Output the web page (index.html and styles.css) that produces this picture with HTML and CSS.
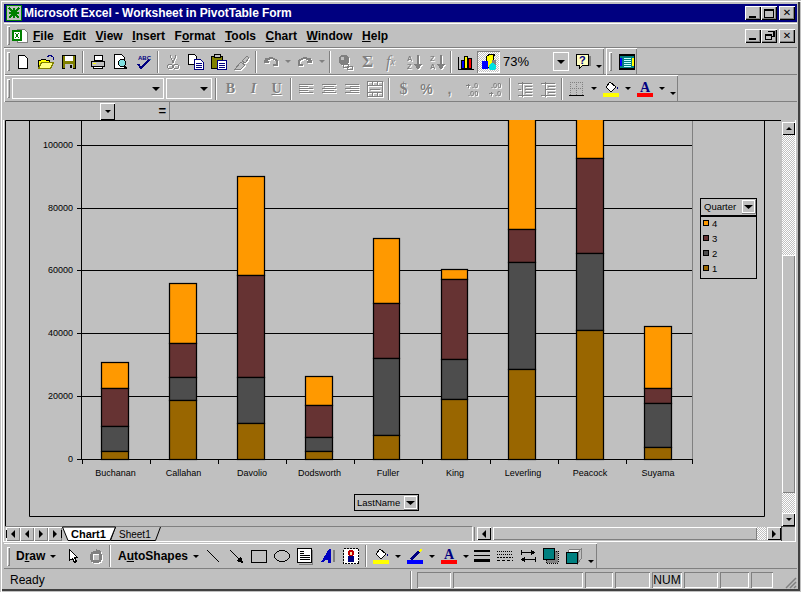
FILE: index.html
```html
<!DOCTYPE html>
<html lang="en">
<head>
    <meta charset="UTF-8">
    <meta name="viewport" content="width=device-width, initial-scale=1.0">
    <title>Microsoft Excel - Worksheet in PivotTable Form</title>
    <link rel="stylesheet" href="styles.css">
</head>
<body>
<div class="window">
    <div class="titlebar">
        <svg class="ic" viewBox="0 0 16 16"><rect x="0.5" y="0.5" width="15" height="15" fill="#c0c0c0" stroke="#008000"/><path d="M3 3l10 10M13 3L3 13M3 8h10M8 3v10" stroke="#008000" stroke-width="2"/></svg>
        <span class="title-text">Microsoft Excel - Worksheet in PivotTable Form</span>
        <div class="winbtns">
            <span class="winbtn"><i class="g-min"></i></span>
            <span class="winbtn"><i class="g-max"></i></span>
            <span class="winbtn gap"><b class="g-x">✕</b></span>
        </div>
    </div>

    <div class="menubar">
        <span class="grip"></span>
        <svg class="ic menu-icon" viewBox="0 0 16 16"><path d="M5.5 1.5h7l3 3v10h-10z" fill="#fff" stroke="#808080"/><rect x="0" y="2" width="10" height="11" fill="#008000"/><rect x="2" y="4" width="6" height="7" fill="#fff"/><path d="M3 5l4 5M7 5l-4 5" stroke="#008000"/></svg>
        <nav class="menu">
            <span><u>F</u>ile</span><span><u>E</u>dit</span><span><u>V</u>iew</span><span><u>I</u>nsert</span><span>F<u>o</u>rmat</span><span><u>T</u>ools</span><span><u>C</u>hart</span><span><u>W</u>indow</span><span><u>H</u>elp</span>
        </nav>
        <div class="winbtns">
            <span class="winbtn"><i class="g-min"></i></span>
            <span class="winbtn"><i class="g-restore"></i></span>
            <span class="winbtn gap"><b class="g-x">✕</b></span>
        </div>
    </div>

    <div class="tbrow">
        <div class="toolbar standard">
            <span class="grip"></span>
            <span class="btn"><svg class="ic" viewBox="0 0 16 16"><path d="M3.5 1.5h6l3 3v10h-9z" fill="#fff" stroke="#000"/></svg></span>
            <span class="btn"><svg class="ic" viewBox="0 0 16 16"><path d="M0.5 14.5v-8h2l1-1h4l1 1h3v2" fill="#ffff00" stroke="#000"/><path d="M0.5 14.5l3-6h12l-3 6z" fill="#ffff80" stroke="#808000"/><path d="M9 3l3-2 3 2M15 3v3" fill="none" stroke="#000080"/></svg></span>
            <span class="btn"><svg class="ic" viewBox="0 0 16 16"><rect x="1.5" y="1.5" width="13" height="13" fill="#808000" stroke="#000"/><rect x="4" y="2" width="8" height="5" fill="#fff"/><rect x="4" y="10" width="8" height="5" fill="#c0c0c0"/><rect x="9" y="11" width="2" height="3" fill="#000"/></svg></span>
            <span class="sep"></span>
            <span class="btn"><svg class="ic" viewBox="0 0 16 16"><path d="M4.5 1.5h8v5h-8z" fill="#fff" stroke="#000"/><path d="M1.5 7.5h13v5h-13z" fill="#c0c0c0" stroke="#000"/><path d="M3.5 12.5h9v2h-9z" fill="#fff" stroke="#000"/><path d="M3 9h3" stroke="#ffff00"/></svg></span>
            <span class="btn"><svg class="ic" viewBox="0 0 16 16"><path d="M1.5 0.5h7l3 3v11h-10z" fill="#fff" stroke="#000"/><circle cx="9" cy="9" r="3.5" fill="#80e0e0" stroke="#000"/><path d="M11 12l3 3" stroke="#000" stroke-width="2"/></svg></span>
            <span class="btn"><svg class="ic" viewBox="0 0 16 16"><text x="2" y="6" class="tiny">ABC</text><path d="M2 10l3 4 8-8" fill="none" stroke="#000080" stroke-width="2"/></svg></span>
            <span class="sep"></span>
            <span class="btn"><svg class="ic dis" viewBox="0 0 16 16"><path d="M5 1l3 8M11 1L8 9" stroke="#808080"/><circle cx="5" cy="12.500" r="2.500" fill="none" stroke="#808080"/><circle cx="11" cy="12.500" r="2.500" fill="none" stroke="#808080"/></svg></span>
            <span class="btn"><svg class="ic" viewBox="0 0 16 16"><path d="M0.500 0.500h6l2 2v8h-8z" fill="#fff" stroke="#000"/><path d="M6.500 5.500h6l3 3v7h-9z" fill="#fff" stroke="#000080"/><path d="M8 9h6M8 11h6M8 13h6" stroke="#000080"/></svg></span>
            <span class="btn"><svg class="ic" viewBox="0 0 16 16"><path d="M0.500 2.500h11v12h-11z" fill="#808000" stroke="#000"/><rect x="3" y="0" width="6" height="3" fill="#c0c0c0" stroke="#000"/><path d="M6.500 6.500h9v9h-9z" fill="#fff" stroke="#000080"/><path d="M8 9h6M8 11h6M8 13h6" stroke="#000080"/></svg></span>
            <span class="btn"><svg class="ic dis" viewBox="0 0 16 16"><path d="M1 15l6-7 4 3-4 4zM8 7l5-5 2 2-4 5z" fill="#c0c0c0" stroke="#808080"/></svg></span>
            <span class="sep"></span>
            <span class="btn"><svg class="ic dis" viewBox="0 0 16 16"><path d="M3 4l-1 4 4 0M2.500 8C5 3 10 3 14 7v4h-4" fill="none" stroke="#808080" stroke-width="2"/></svg></span>
            <span class="drop"><i class="arr off"></i></span>
            <span class="btn"><svg class="ic dis" viewBox="0 0 16 16"><path d="M13 4l1 4-4 0M13.500 8C11 3 6 3 2 7v4h4" fill="none" stroke="#808080" stroke-width="2"/></svg></span>
            <span class="drop"><i class="arr off"></i></span>
            <span class="sep"></span>
            <span class="btn"><svg class="ic dis" viewBox="0 0 16 16"><circle cx="7" cy="6" r="5.500" fill="#808080"/><path d="M4 3h3v3H4z" fill="#c0c0c0"/><rect x="6.500" y="10.500" width="5" height="3" rx="1" fill="none" stroke="#808080"/><rect x="10.500" y="12.500" width="5" height="3" rx="1" fill="none" stroke="#808080"/></svg></span>
            <span class="btn off-text serif sigma">Σ</span>
            <span class="btn off-text serif fx"><em>f</em><small>x</small></span>
            <span class="btn"><svg class="ic dis" viewBox="0 0 16 16"><text x="1" y="7" class="sort">A</text><text x="1" y="15" class="sort">Z</text><path d="M12 1v11M9 10l3 4 3-4" fill="none" stroke="#808080" stroke-width="2"/></svg></span>
            <span class="btn"><svg class="ic dis" viewBox="0 0 16 16"><text x="1" y="7" class="sort">Z</text><text x="1" y="15" class="sort">A</text><path d="M12 1v11M9 10l3 4 3-4" fill="none" stroke="#808080" stroke-width="2"/></svg></span>
            <span class="sep"></span>
            <span class="btn"><svg class="ic" viewBox="0 0 16 16"><path d="M0 15.500h16M0.500 3v13" stroke="#000"/><rect x="3.500" y="6.500" width="3" height="8" fill="#0000ff" stroke="#000"/><rect x="6.500" y="2.500" width="3" height="12" fill="#ffff00" stroke="#000"/><rect x="10.500" y="4.500" width="3" height="10" fill="#ff0000" stroke="#000"/></svg></span>
            <span class="btn on"><svg class="ic" viewBox="0 0 16 16"><path d="M5 3l4-3h5l-2 3v10H5z" fill="#ffff00" stroke="#000"/><path d="M1 7h6v8H1z" fill="#0000ff"/><path d="M11 6h4v5h-4z" fill="#808080"/><circle cx="11.500" cy="12.500" r="3.500" fill="#00e0e0"/></svg></span>
            <span class="zoombox">73%<i class="zoomdrop"><i class="arr big"></i></i></span>
            <span class="btn help"><svg class="ic" viewBox="0 0 16 16"><path d="M1.500 0.500h12v11h-6l-3 3v-3h-3z" fill="#ffffc0" stroke="#000"/><path d="M15 2v10" stroke="#808080" stroke-width="1.500"/><text x="4" y="10" class="qm">?</text></svg></span>
            <span class="drop narrow"><i class="arr more"></i></span>
        </div>
        <div class="toolbar mini">
            <span class="grip"></span>
            <svg class="ic" viewBox="0 0 16 16"><rect width="16" height="16" fill="#000"/><rect x="1" y="2" width="14" height="12" fill="#008080"/><path d="M5 4h7M5 6h7M5 8h7M5 10h7M5 12h7" stroke="#c0ffff"/><rect x="1" y="4" width="2" height="8" fill="#0000ff"/><rect x="13" y="4" width="2" height="8" fill="#ffff00"/></svg>
        </div>
    </div>

    <div class="tbrow">
        <div class="toolbar formatting">
            <span class="grip"></span>
            <span class="combo font"><i class="arr big"></i></span>
            <span class="combo size"><i class="arr big"></i></span>
            <span class="sep"></span>
            <span class="btn off-text serif bold">B</span>
            <span class="btn off-text serif bold italic">I</span>
            <span class="btn off-text serif bold under">U</span>
            <span class="sep"></span>
            <span class="btn"><svg class="ic dis" viewBox="0 0 16 16"><path d="M1 3.500h14M1 5.500h9M1 7.500h14M1 9.500h9M1 11.500h14" stroke="#808080"/></svg></span>
            <span class="btn"><svg class="ic dis" viewBox="0 0 16 16"><path d="M1 3.500h14M3 5.500h10M1 7.500h14M3 9.500h10M1 11.500h14" stroke="#808080"/></svg></span>
            <span class="btn"><svg class="ic dis" viewBox="0 0 16 16"><path d="M1 3.500h14M6 5.500h9M1 7.500h14M6 9.500h9M1 11.500h14" stroke="#808080"/></svg></span>
            <span class="btn"><svg class="ic dis" viewBox="0 0 16 16"><rect x="0.500" y="0.500" width="15" height="15" fill="none" stroke="#808080"/><path d="M1 4.500h14M1 11.500h14M5.500 1v3M10.500 1v3M5.500 12v3M10.500 12v3M3 8h10" stroke="#808080"/></svg></span>
            <span class="sep"></span>
            <span class="btn off-text serif bold big">$</span>
            <span class="btn off-text sans bold">%</span>
            <span class="btn off-text sans bold">,</span>
            <span class="btn"><svg class="ic dis" viewBox="0 0 16 16"><path d="M1 4.500h4M3 2.500v4" stroke="#808080"/><text x="7" y="7" class="sort">.0</text><text x="3" y="15" class="sort">.00</text></svg></span>
            <span class="btn"><svg class="ic dis" viewBox="0 0 16 16"><text x="3" y="7" class="sort">.00</text><path d="M1 12.500h4M3 10.500v4" stroke="#808080"/><text x="7" y="15" class="sort">.0</text></svg></span>
            <span class="sep"></span>
            <span class="btn"><svg class="ic dis" viewBox="0 0 16 16"><path d="M1 2.500h14M8 5.500h7M8 8.500h7M8 11.500h7M1 14.500h14M5.500 1v15M1 8.500h3" stroke="#808080"/></svg></span>
            <span class="btn"><svg class="ic dis" viewBox="0 0 16 16"><path d="M1 2.500h14M8 5.500h7M8 8.500h7M8 11.500h7M1 14.500h14M5.500 1v15M6 8.500h2" stroke="#808080"/></svg></span>
            <span class="sep"></span>
            <span class="btn"><svg class="ic" viewBox="0 0 16 16"><path d="M1 1.500h13M1 7.500h13M1.500 1v13M7.500 1v13M13.500 1v13" stroke="#808080" stroke-dasharray="1 1"/><path d="M0 14.500h15" stroke="#000"/></svg></span>
            <span class="drop"><i class="arr"></i></span>
            <span class="btn"><svg class="ic" viewBox="0 0 16 16"><path d="M7 1l6 5-5 5-5-5z" fill="#fff" stroke="#000"/><path d="M13 5c2 1 3 3 2 5l-1-4z" fill="#000080"/><rect y="12" width="16" height="4" fill="#ffff00"/></svg></span>
            <span class="drop"><i class="arr"></i></span>
            <span class="btn"><svg class="ic" viewBox="0 0 16 16"><text x="8" y="11" class="fonta">A</text><rect y="12" width="16" height="4" fill="#ff0000"/></svg></span>
            <span class="drop"><i class="arr"></i></span>
            <span class="drop"><i class="arr more"></i></span>
        </div>
    </div>

    <div class="formula">
        <span class="namebox"><span class="namedrop"><i class="arr"></i></span></span>
        <span class="equals">=</span>
    </div>

    <div class="workbook">
        <div class="sheet">
            <svg class="chart" viewBox="5 120 776 406" width="776" height="406">
                <path class="frame" d="M5.500 526V120.500H781"/>
                <path class="frame" d="M29.500 120v396.500h735V120"/>
                <path class="plotedge" d="M692.500 121v338"/>
                <g class="grid">
                    <path d="M77 145.500h615M77 208.500h615M77 270.500h615M77 333.500h615M77 396.500h615"/>
                    <path d="M81.500 120v339.500M77 459.500h616"/>
                    <path d="M82.500 459v5M150.500 459v5M218.500 459v5M286.500 459v5M354.500 459v5M422.500 459v5M490.500 459v5M558.500 459v5M626.500 459v5M692.500 459v5"/>
                </g>
                <g class="axis-y">
                    <text x="73" y="148">100000</text>
                    <text x="73" y="211">80000</text>
                    <text x="73" y="273">60000</text>
                    <text x="73" y="336">40000</text>
                    <text x="73" y="399">20000</text>
                    <text x="73" y="462">0</text>
                </g>
                <g class="bars">
                    <rect class="s4" x="101.500" y="362.500" width="27" height="26"/><rect class="s3" x="101.500" y="388.500" width="27" height="38"/><rect class="s2" x="101.500" y="426.500" width="27" height="25"/><rect class="s1" x="101.500" y="451.500" width="27" height="8"/>
                    <rect class="s4" x="169.500" y="283.500" width="27" height="60"/><rect class="s3" x="169.500" y="343.500" width="27" height="34"/><rect class="s2" x="169.500" y="377.500" width="27" height="23"/><rect class="s1" x="169.500" y="400.500" width="27" height="59"/>
                    <rect class="s4" x="237.500" y="176.500" width="27" height="99"/><rect class="s3" x="237.500" y="275.500" width="27" height="102"/><rect class="s2" x="237.500" y="377.500" width="27" height="46"/><rect class="s1" x="237.500" y="423.500" width="27" height="36"/>
                    <rect class="s4" x="305.500" y="376.500" width="27" height="29"/><rect class="s3" x="305.500" y="405.500" width="27" height="32"/><rect class="s2" x="305.500" y="437.500" width="27" height="14"/><rect class="s1" x="305.500" y="451.500" width="27" height="8"/>
                    <rect class="s4" x="373.500" y="238.500" width="26" height="65"/><rect class="s3" x="373.500" y="303.500" width="26" height="55"/><rect class="s2" x="373.500" y="358.500" width="26" height="77"/><rect class="s1" x="373.500" y="435.500" width="26" height="24"/>
                    <rect class="s4" x="441.500" y="269.500" width="26" height="10"/><rect class="s3" x="441.500" y="279.500" width="26" height="80"/><rect class="s2" x="441.500" y="359.500" width="26" height="40"/><rect class="s1" x="441.500" y="399.500" width="26" height="60"/>
                    <rect class="s4" x="508.500" y="118" width="27" height="111.500"/><rect class="s3" x="508.500" y="229.500" width="27" height="33"/><rect class="s2" x="508.500" y="262.500" width="27" height="107"/><rect class="s1" x="508.500" y="369.500" width="27" height="90"/>
                    <rect class="s4" x="576.500" y="118" width="27" height="40.500"/><rect class="s3" x="576.500" y="158.500" width="27" height="95"/><rect class="s2" x="576.500" y="253.500" width="27" height="77"/><rect class="s1" x="576.500" y="330.500" width="27" height="129"/>
                    <rect class="s4" x="644.500" y="326.500" width="27" height="62"/><rect class="s3" x="644.500" y="388.500" width="27" height="15"/><rect class="s2" x="644.500" y="403.500" width="27" height="44"/><rect class="s1" x="644.500" y="447.500" width="27" height="12"/>
                </g>
                <g class="axis-x">
                    <text x="115.500" y="476">Buchanan</text>
                    <text x="183.500" y="476">Callahan</text>
                    <text x="252" y="476">Davolio</text>
                    <text x="319.500" y="476">Dodsworth</text>
                    <text x="388" y="476">Fuller</text>
                    <text x="455" y="476">King</text>
                    <text x="523" y="476">Leverling</text>
                    <text x="590" y="476">Peacock</text>
                    <text x="658" y="476">Suyama</text>
                </g>
                <g class="field">
                    <rect class="field-box" x="354.500" y="494.500" width="64" height="16"/>
                    <text x="357" y="506">LastName</text>
                    <rect class="field-btn" x="404.500" y="496.500" width="12" height="12"/>
                    <path class="field-dark" d="M417.500 496v13.500H404"/>
                    <path d="M406 501h9l-4.500 4z"/>
                </g>
                <g class="field">
                    <rect class="legend-box" x="700.500" y="198.500" width="56" height="80"/>
                    <rect class="field-box" x="700.500" y="198.500" width="56" height="18"/>
                    <path class="field-rule" d="M701 216h55"/>
                    <text x="704" y="210">Quarter</text>
                    <rect class="field-btn" x="742.500" y="200.500" width="12" height="12"/>
                    <path class="field-dark" d="M755.500 200v13.500H742"/>
                    <path d="M744 205h9l-4.500 4z"/>
                    <rect class="s4" x="703.500" y="220.500" width="5" height="5"/><text x="712" y="227">4</text>
                    <rect class="s3" x="703.500" y="235.500" width="5" height="5"/><text x="712" y="242">3</text>
                    <rect class="s2" x="703.500" y="250.500" width="5" height="5"/><text x="712" y="257">2</text>
                    <rect class="s1" x="703.500" y="265.500" width="5" height="5"/><text x="712" y="272">1</text>
                </g>
            </svg>
            <div class="vscroll">
                <span class="sbtn"><i class="up"></i></span>
                <span class="track upper"></span>
                <span class="thumb"></span>
                <span class="track lower"></span>
                <span class="sbtn"><i class="down"></i></span>
            </div>
        </div>
        <div class="tabbar">
            <div class="tabarea">
                <div class="tabnav">
                    <span class="nav"><i class="first"></i></span>
                    <span class="nav"><i class="prev"></i></span>
                    <span class="nav"><i class="next"></i></span>
                    <span class="nav"><i class="last"></i></span>
                </div>
                <svg class="tabs" viewBox="0 0 104 14" width="104" height="14">
                    <path class="tab-sheet" d="M53.500 0l-5 13.500h45L98.500 0"/>
                    <path class="tab-active" d="M0.500 0l5.500 13.500h42L53.500 0z"/>
                    <text class="tab-bold" x="9" y="11">Chart1</text>
                    <text class="tab-plain" x="57" y="11">Sheet1</text>
                </svg>
            </div>
            <span class="tabsplit"></span>
            <div class="hscroll">
                <span class="sbtn"><i class="prev"></i></span>
                <span class="thumb"></span>
                <span class="track"></span>
                <span class="sbtn"><i class="next"></i></span>
            </div>
            <span class="corner"></span>
        </div>
    </div>

    <div class="tbrow drawrow">
        <div class="toolbar draw">
            <span class="grip"></span>
            <span class="textbtn"><span>D<u>r</u>aw</span><i class="arr"></i></span>
            <span class="btn cursor"><svg class="ic" viewBox="0 0 16 16"><path d="M4.500 1.500v11l3-2 2 4 2-1-2-4h3z" fill="#fff" stroke="#000"/></svg></span>
            <span class="btn"><svg class="ic dis" viewBox="0 0 16 16"><circle cx="8" cy="9" r="5" fill="none" stroke="#808080" stroke-width="3"/><path d="M8 1l5 2-3 4z" fill="#808080"/></svg></span>
            <span class="sep"></span>
            <span class="textbtn auto"><span>A<u>u</u>toShapes</span><i class="arr"></i></span>
            <span class="btn"><svg class="ic" viewBox="0 0 16 16"><path d="M2 2l12 12" stroke="#000" fill="none"/></svg></span>
            <span class="btn"><svg class="ic" viewBox="0 0 16 16"><path d="M2 2l10 10" stroke="#000"/><path d="M15 15l-7-2 5-5z" fill="#000"/></svg></span>
            <span class="btn"><svg class="ic" viewBox="0 0 16 16"><rect x="0.500" y="2.500" width="15" height="12" fill="none" stroke="#000"/></svg></span>
            <span class="btn"><svg class="ic" viewBox="0 0 16 16"><ellipse cx="8" cy="8" rx="7.500" ry="5.500" fill="none" stroke="#000"/></svg></span>
            <span class="btn"><svg class="ic" viewBox="0 0 16 16"><rect x="0.500" y="0.500" width="14" height="14" fill="#fff" stroke="#000"/><path d="M15.500 2v14H2" fill="none" stroke="#808080"/><path d="M3 3h4M3 5h4M3 7h10M3 9h10M3 11h10" stroke="#000"/></svg></span>
            <span class="btn"><svg class="ic" viewBox="0 0 16 16"><path d="M1 14L9 1h2v14H8v-3H5l-2 2z" fill="#0000c0"/><path d="M14 2v12" stroke="#808080" stroke-width="2"/></svg></span>
            <span class="btn"><svg class="ic" viewBox="0 0 16 16"><rect x="0.500" y="0.500" width="15" height="15" fill="#fff" stroke="#000" stroke-dasharray="2 1"/><circle cx="8" cy="5" r="3" fill="#c00000"/><rect x="5" y="8" width="6" height="6" fill="#000080"/><rect x="7" y="4" width="2" height="3" fill="#ffe0a0"/></svg></span>
            <span class="sep draw-sep"></span>
            <span class="btn"><svg class="ic" viewBox="0 0 16 16"><path d="M7 1l6 5-5 5-5-5z" fill="#fff" stroke="#000"/><path d="M13 5c2 1 3 3 2 5l-1-4z" fill="#000080"/><rect y="12" width="16" height="4" fill="#ffff00"/></svg></span>
            <span class="drop"><i class="arr"></i></span>
            <span class="btn"><svg class="ic" viewBox="0 0 16 16"><path d="M2 11l9-8 2 2-8 7z" fill="#000080"/><path d="M11 3l3-3 1 2-2 3z" fill="#ffff00"/><rect y="12" width="16" height="4" fill="#0000ff"/></svg></span>
            <span class="drop"><i class="arr"></i></span>
            <span class="btn"><svg class="ic" viewBox="0 0 16 16"><text x="8" y="11" class="fonta">A</text><rect y="12" width="16" height="4" fill="#ff0000"/></svg></span>
            <span class="drop"><i class="arr"></i></span>
            <span class="btn lines-btn"><svg class="ic" viewBox="0 0 16 16"><path d="M0 3h16" stroke="#000" stroke-width="2"/><path d="M0 7.500h16" stroke="#000"/><path d="M0 12h16" stroke="#000" stroke-width="3"/></svg></span>
            <span class="btn"><svg class="ic" viewBox="0 0 16 16"><path d="M0 3.500h16M0 6.500h16" stroke="#000" stroke-dasharray="1 1"/><path d="M0 9.500h16" stroke="#000" stroke-dasharray="2 1"/><path d="M0 12.500h16" stroke="#000" stroke-dasharray="3 2"/></svg></span>
            <span class="btn"><svg class="ic" viewBox="0 0 16 16"><path d="M1 3.500h14M1 12.500h14M4 1v14M12 1v14" stroke="#c0c0c0" stroke-width="0"/><path d="M1 4.500h13M2 11.500h13" stroke="#000"/><path d="M15 4.500l-4-3v6zM1 11.500l4-3v6z" fill="#000"/><path d="M1 2v5M15 9v5" stroke="#000"/></svg></span>
            <span class="btn"><svg class="ic" viewBox="0 0 16 16"><rect x="3" y="3" width="12" height="12" fill="#808080" stroke="#000" stroke-dasharray="1 1"/><rect x="0.500" y="0.500" width="11" height="11" fill="#008080" stroke="#000"/></svg></span>
            <span class="btn"><svg class="ic" viewBox="0 0 16 16"><path d="M4 1h11l-3 4H1z" fill="#fff" stroke="#808080"/><path d="M12 5l3-4v10l-3 4z" fill="#c0c0c0" stroke="#808080"/><rect x="0.500" y="4.500" width="11" height="11" fill="#008080" stroke="#000"/></svg></span>
            <span class="drop"><i class="arr more"></i></span>
        </div>
    </div>

    <div class="statusbar">
        <span class="status-text">Ready</span>
        <div class="panels">
            <span class="panel p1"></span>
            <span class="panel p2"></span>
            <span class="panel p3"></span>
            <span class="panel p4"></span>
            <span class="panel p5">NUM</span>
            <span class="panel p6"></span>
            <span class="panel p7"></span>
            <span class="panel p8"></span>
        </div>
        <svg class="sizegrip" viewBox="0 0 13 13" width="13" height="13"><path d="M12 2L2 12M12 6l-6 6M12 10l-2 2" stroke="#808080" stroke-width="1.500"/></svg>
    </div>
</div>
</body>
</html>
```

FILE: styles.css
```css
* {
    box-sizing: border-box;
}
html, body {
    margin: 0;
    padding: 0;
    background-color: #c0c0c0;
}
body {
    font-family: "Liberation Sans", Arial, sans-serif;
    font-size: 12px;
    color: #000;
}
.window {
    width: 801px;
    height: 592px;
    padding: 4px;
    display: flex;
    flex-direction: column;
    overflow: hidden;
    box-shadow: inset 1px 1px 0 #c0c0c0, inset 2px 2px 0 #fff, inset -1px -1px 0 #c0c0c0, inset -3px -3px 0 #404040;
}
.ic {
    width: 16px;
    height: 16px;
    flex: none;
    display: block;
    overflow: visible;
    shape-rendering: crispEdges;
}
.dis {
    filter: drop-shadow(1px 1px 0 #fff);
}
i {
    display: block;
    font-style: normal;
}

/* title bar */
.titlebar {
    height: 18px;
    flex: none;
    margin-bottom: 1px;
    padding: 0 2px;
    background-color: #000080;
    color: #fff;
    display: flex;
    align-items: center;
    gap: 2px;
}
.title-text {
    font-weight: bold;
    font-size: 12px;
    letter-spacing: -0.07px;
}
.winbtns {
    margin-left: auto;
    display: flex;
}
.winbtn {
    width: 16px;
    height: 14px;
    background-color: #c0c0c0;
    box-shadow: inset 1px 1px 0 #fff, inset -1px -1px 0 #000, inset -2px -2px 0 #808080;
    color: #000;
    display: flex;
    align-items: center;
    justify-content: center;
}
.winbtn.gap {
    margin-left: 2px;
}
.g-min {
    width: 7px;
    height: 2px;
    background-color: #000;
    margin-top: 7px;
    margin-right: 2px;
}
.g-max {
    width: 10px;
    height: 9px;
    border: 1px solid #000;
    border-top-width: 2px;
}
.g-restore {
    width: 7px;
    height: 6px;
    border: 1px solid #000;
    border-top-width: 2px;
    background-color: #c0c0c0;
    margin: 3px 2px 0 0;
    box-shadow: 2px -3px 0 -1px #c0c0c0, 3px -3px 0 #000;
}
.g-x {
    font-size: 10px;
    line-height: 10px;
    font-family: "DejaVu Sans", sans-serif;
}

/* menu and toolbars */
.grip {
    width: 3px;
    flex: none;
    align-self: center;
    height: 19px;
    margin: 0 1px 0 3px;
    box-shadow: inset 1px 1px 0 #fff, inset -1px -1px 0 #808080;
}
.menubar {
    height: 25px;
    flex: none;
    display: flex;
    align-items: center;
    box-shadow: inset 0 1px 0 #fff, inset 0 -1px 0 #808080;
}
.menu-icon {
    margin-left: 1px;
}
.menu {
    display: flex;
    gap: 9.6px;
    margin-left: 5px;
    font-weight: bold;
}
.menubar .winbtns {
    margin-right: 2px;
}
.tbrow {
    height: 27px;
    flex: none;
    display: flex;
    box-shadow: inset 0 -1px 0 #808080;
}
.toolbar {
    display: flex;
    align-items: center;
    height: 27px;
    box-shadow: inset 1px 1px 0 #fff, inset -1px -1px 0 #808080;
}
.standard {
    width: 600px;
    margin-right: 2px;
}
.mini {
    width: 31px;
}
.mini .ic {
    margin-left: 6px;
}
.formatting {
    width: 674px;
}
.btn {
    width: 23px;
    height: 22px;
    flex: none;
    display: flex;
    align-items: center;
    justify-content: center;
}
.btn.on {
    background: repeating-conic-gradient(#fff 0 25%, #c0c0c0 0 50%) 0 0 / 2px 2px;
    box-shadow: inset 1px 1px 0 #808080, inset -1px -1px 0 #fff;
}
.sep {
    width: 6px;
    height: 22px;
    flex: none;
}
.sep::before {
    content: "";
    display: block;
    width: 2px;
    height: 22px;
    margin-left: 2px;
    box-shadow: inset 1px 0 0 #808080, inset -1px 0 0 #fff;
}
.drop {
    width: 11px;
    height: 22px;
    flex: none;
    display: flex;
    align-items: center;
    justify-content: center;
}
.drop.narrow {
    width: 9px;
}
.arr {
    width: 0;
    height: 0;
    border-left: 3px solid transparent;
    border-right: 3px solid transparent;
    border-top: 3px solid #000;
}
.arr.off {
    border-top-color: #808080;
}
.arr.more {
    margin-top: 10px;
}
.arr.big {
    border-left-width: 4px;
    border-right-width: 4px;
    border-top-width: 4px;
}
.off-text {
    color: #808080;
    text-shadow: 1px 1px 0 #fff;
    font-size: 14px;
}
.off-text.big {
    font-size: 16px;
}
.sigma {
    font-size: 17px;
    font-weight: bold;
}
.serif {
    font-family: "Liberation Serif", serif;
}
.sans {
    font-family: "Liberation Sans", sans-serif;
}
.bold {
    font-weight: bold;
}
.italic {
    font-style: italic;
}
.under {
    text-decoration: underline;
}
.fx em {
    font-size: 16px;
}
.fx small {
    font-size: 10px;
    font-style: italic;
}
.tiny {
    font-size: 6px;
    font-family: "Liberation Sans", sans-serif;
    font-weight: bold;
    fill: #000080;
}
.sort {
    font-size: 7.500px;
    font-weight: bold;
    fill: #808080;
    font-family: "Liberation Sans", sans-serif;
}
.qm {
    font-size: 11px;
    font-weight: bold;
    fill: #000080;
    font-family: "Liberation Sans", sans-serif;
}
.fonta {
    font-size: 14px;
    font-weight: bold;
    fill: #000080;
    font-family: "Liberation Serif", serif;
    text-anchor: middle;
}
.zoombox {
    width: 68px;
    height: 22px;
    flex: none;
    margin: 0 1px;
    font-size: 13px;
    display: flex;
    align-items: center;
    padding-left: 2px;
}
.zoomdrop {
    width: 14px;
    height: 17px;
    margin-left: auto;
    margin-right: 1px;
    box-shadow: 0 0 0 1px #fff;
    display: flex;
    align-items: center;
    justify-content: center;
}
.help {
    margin-left: 1px;
}
.combo {
    height: 21px;
    flex: none;
    border: 1px solid #fff;
    display: flex;
    align-items: center;
    justify-content: flex-end;
    padding-right: 3px;
}
.combo.font {
    width: 152px;
    margin-left: 1px;
}
.combo.size {
    width: 46px;
    margin-left: 2px;
    margin-right: 1px;
}

/* formula row */
.formula {
    height: 18px;
    flex: none;
    display: flex;
    align-items: center;
}
.namebox {
    width: 111px;
    height: 17px;
    display: flex;
    justify-content: flex-end;
}
.namedrop {
    width: 15px;
    height: 17px;
    box-shadow: inset 1px 1px 0 #fff, inset -1px -1px 0 #000;
    display: flex;
    align-items: center;
    justify-content: center;
}
.equals {
    height: 18px;
    line-height: 17px;
    width: 55px;
    font-weight: bold;
    font-size: 13px;
    text-align: right;
    padding-right: 3px;
    border-right: 1px solid #808080;
}

/* sheet */
.workbook {
    width: 793px;
    height: 422px;
    flex: none;
    display: flex;
    flex-direction: column;
    margin: 0 0 1px -1px;
    padding-left: 1px;
    border-left: 1px solid #fff;
    border-right: 1px solid #fff;
    border-bottom: 1px solid #fff;
}
.sheet {
    height: 406px;
    flex: none;
    display: flex;
}
.chart {
    flex: none;
    display: block;
    background-color: #c0c0c0;
}
.frame {
    fill: none;
    stroke: #000;
}
.plotedge {
    fill: none;
    stroke: #808080;
}
.grid path {
    fill: none;
    stroke: #000;
}
.axis-y text, .axis-x text, .field text {
    font-family: "Liberation Sans", sans-serif;
    font-size: 9px;
    fill: #000;
}
.field text {
    font-size: 9.500px;
}
.axis-y text {
    text-anchor: end;
}
.axis-x text {
    text-anchor: middle;
}
.bars rect {
    stroke: #000;
    stroke-width: 1.250px;
}
.s1 { fill: #996600; }
.s2 { fill: #4d4d4d; }
.s3 { fill: #663333; }
.s4 { fill: #ff9900; }
.field rect.s1, .field rect.s2, .field rect.s3, .field rect.s4 {
    stroke: #000;
}
.field-box {
    fill: #c0c0c0;
    stroke: #000;
}
.legend-box {
    fill: none;
    stroke: #000;
}
.field-rule {
    stroke: #000;
    stroke-width: 2px;
}
.field-btn {
    fill: #c0c0c0;
    stroke: #fff;
}
.field-dark {
    fill: none;
    stroke: #808080;
}
.vscroll {
    width: 13px;
    margin-left: 1px;
    padding-top: 2px;
    flex: none;
    display: flex;
    flex-direction: column;
}
.sbtn {
    width: 13px;
    height: 13px;
    flex: none;
    background-color: #c0c0c0;
    box-shadow: inset 1px 1px 0 #fff, inset -1px -1px 0 #000;
    display: flex;
    align-items: center;
    justify-content: center;
}
.track {
    flex: none;
    width: 13px;
    background: repeating-conic-gradient(#fff 0 25%, #c0c0c0 0 50%) 0 0 / 2px 2px;
}
.track.upper {
    height: 120px;
}
.track.lower {
    height: 20px;
}
.vscroll .thumb {
    width: 13px;
    height: 238px;
    flex: none;
    box-shadow: inset 1px 1px 0 #fff, inset -1px -1px 0 #808080, 0 1px 0 #000;
}
.up, .down, .prev, .next, .first, .last {
    width: 0;
    height: 0;
    border: 3px solid transparent;
}
.up {
    border-bottom-color: #000;
    margin-top: -3px;
}
.down {
    border-top-color: #000;
    margin-top: 3px;
}
.prev, .first {
    border-width: 4px;
    border-right-color: #000;
    margin-left: -4px;
}
.next, .last {
    border-width: 4px;
    border-left-color: #000;
    margin-left: 4px;
}
.first {
    box-shadow: -1px 0 0 #000;
}
.last {
    box-shadow: 1px 0 0 #000;
}

/* tabs */
.tabbar {
    height: 15px;
    flex: none;
    display: flex;
}
.tabarea {
    width: 467px;
    flex: none;
    display: flex;
    border-top: 1px solid #808080;
}
.tabnav {
    display: flex;
    margin-left: 1px;
}
.nav {
    width: 14px;
    height: 14px;
    box-shadow: inset 1px 1px 0 #fff, inset -1px -1px 0 #808080;
    display: flex;
    align-items: center;
    justify-content: center;
}
.tabs {
    flex: none;
    display: block;
    overflow: visible;
}
.tab-active {
    fill: #fff;
    stroke: #000;
}
.tab-sheet {
    fill: #c0c0c0;
    stroke: #000;
}
.tab-bold {
    font-family: "Liberation Sans", sans-serif;
    font-size: 11px;
    font-weight: bold;
}
.tab-plain {
    font-family: "Liberation Sans", sans-serif;
    font-size: 10px;
}
.tabsplit {
    width: 3px;
    height: 14px;
    margin-top: 1px;
    box-shadow: inset 1px 0 0 #fff, inset -1px 0 0 #808080;
}
.hscroll {
    width: 304px;
    margin: 1px 0 0 2px;
    display: flex;
}
.hscroll .sbtn {
    width: 14px;
}
.hscroll .thumb {
    width: 265px;
    height: 13px;
    margin-left: 2px;
    box-shadow: inset 1px 1px 0 #fff, inset -1px -1px 0 #808080;
}
.hscroll .track {
    width: 9px;
    height: 13px;
    margin-right: 1px;
}
.corner {
    width: 14px;
    border-top: 1px solid #404040;
    border-left: 1px solid #404040;
}

/* draw toolbar */
.drawrow {
    height: 26px;
}
.draw {
    width: 593px;
    height: 26px;
    box-shadow: inset 0 1px 0 #fff, inset -1px -1px 0 #808080;
}
.textbtn {
    font-weight: bold;
    display: flex;
    align-items: center;
    gap: 5px;
    margin-left: 5px;
    width: 44px;
    flex: none;
}
.textbtn.auto {
    width: 83px;
}
.cursor {
    margin-left: 1px;
}
.draw-sep {
    margin-left: 1px;
}
.lines-btn {
    margin-left: -1px;
}

/* status bar */
.statusbar {
    height: 21px;
    flex: none;
    display: flex;
    align-items: center;
    position: relative;
}
.status-text {
    margin-left: 6px;
    width: 400px;
    height: 18px;
    line-height: 18px;
    font-size: 12px;
    box-shadow: 1px 0 0 #808080, 2px 0 0 #fff;
}
.panels {
    display: flex;
    gap: 2px;
    margin-left: 7px;
}
.panel {
    height: 16px;
    flex: none;
    box-shadow: inset 1px 1px 0 #808080, inset -1px -1px 0 #fff;
    font-size: 12px;
    line-height: 17px;
    text-align: center;
}
.p1 { width: 34px; }
.p2 { width: 130px; }
.p3 { width: 28px; }
.p4 { width: 35px; }
.p5 { width: 30px; }
.p6 { width: 34px; }
.p7 { width: 29px; }
.p8 { width: 22px; }
.sizegrip {
    position: absolute;
    right: 0;
    bottom: 1px;
}
```
